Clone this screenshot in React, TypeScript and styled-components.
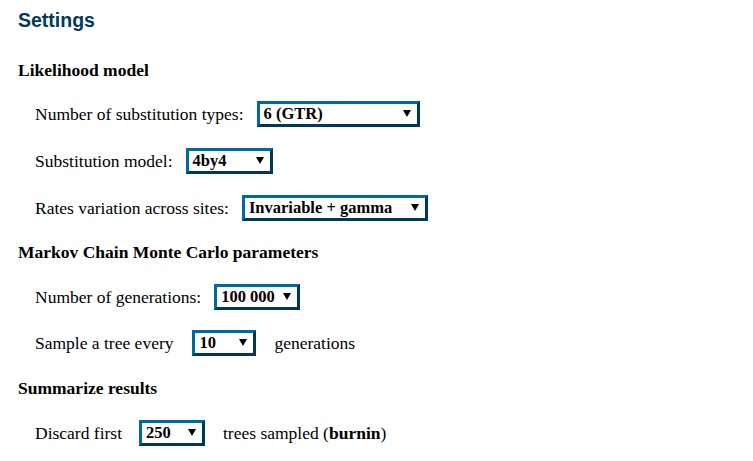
import React from "react";
import styled, { createGlobalStyle } from "styled-components";

const Global = createGlobalStyle`
  html, body { margin: 0; padding: 0; background: #ffffff; }
  body { font-family: "Liberation Serif", "Times New Roman", serif; color: #000; }
`;

const Page = styled.div`
  padding: 8px 18px 0 18px;
  display: flex;
  flex-direction: column;
`;

const Title = styled.h1`
  margin: 0;
  font-family: "Liberation Sans", Arial, sans-serif;
  font-size: 19.5px;
  font-weight: bold;
  line-height: 24px;
  color: #003a5c;
`;

const SectionTitle = styled.h3<{ $top: number }>`
  margin: ${(p) => p.$top}px 0 0 0;
  font-size: 17.5px;
  font-weight: bold;
  line-height: 18px;
`;

const Row = styled.div<{ $top: number }>`
  margin: ${(p) => p.$top}px 0 0 17px;
  display: flex;
  align-items: center;
  font-size: 17.5px;
  line-height: 18px;
`;

const Label = styled.span<{ $gap?: number }>`
  margin-right: ${(p) => p.$gap ?? 13}px;
`;

const After = styled.span`
  margin-left: 18px;
`;

const SelectBox = styled.div<{ $width: number }>`
  box-sizing: border-box;
  width: ${(p) => p.$width}px;
  height: 26px;
  border-style: solid;
  border-width: 3px;
  border-color: #006a9c #003859 #003859 #006a9c;
  background: #fff;
  display: flex;
  align-items: center;
  justify-content: space-between;
  padding: 0 6px 0 4px;
  font-size: 16.5px;
  font-weight: bold;
`;

const Arrow = styled.span`
  width: 0;
  height: 0;
  border-left: 4px solid transparent;
  border-right: 4px solid transparent;
  border-top: 7px solid #000;
  margin-bottom: 1px;
`;

const Bold = styled.b`
  font-weight: bold;
`;

function Select({ value, width }: { value: string; width: number }) {
  return (
    <SelectBox $width={width}>
      <span>{value}</span>
      <Arrow />
    </SelectBox>
  );
}

export default function App() {
  return (
    <>
      <Global />
      <Page>
        <Title>Settings</Title>
        <SectionTitle $top={29}>Likelihood model</SectionTitle>
        <Row $top={22}>
          <Label>Number of substitution types:</Label>
          <Select value="6 (GTR)" width={163} />
        </Row>
        <Row $top={21}>
          <Label>Substitution model:</Label>
          <Select value="4by4" width={87} />
        </Row>
        <Row $top={21}>
          <Label>Rates variation across sites:</Label>
          <Select value="Invariable + gamma" width={186} />
        </Row>
        <SectionTitle $top={22}>Markov Chain Monte Carlo parameters</SectionTitle>
        <Row $top={23}>
          <Label>Number of generations:</Label>
          <Select value="100 000" width={86} />
        </Row>
        <Row $top={20}>
          <Label $gap={19}>Sample a tree every</Label>
          <Select value="10" width={64} />
          <After>generations</After>
        </Row>
        <SectionTitle $top={23}>Summarize results</SectionTitle>
        <Row $top={23}>
          <Label $gap={17}>Discard first</Label>
          <Select value="250" width={66} />
          <After>
            trees sampled (<Bold>burnin</Bold>)
          </After>
        </Row>
      </Page>
    </>
  );
}
